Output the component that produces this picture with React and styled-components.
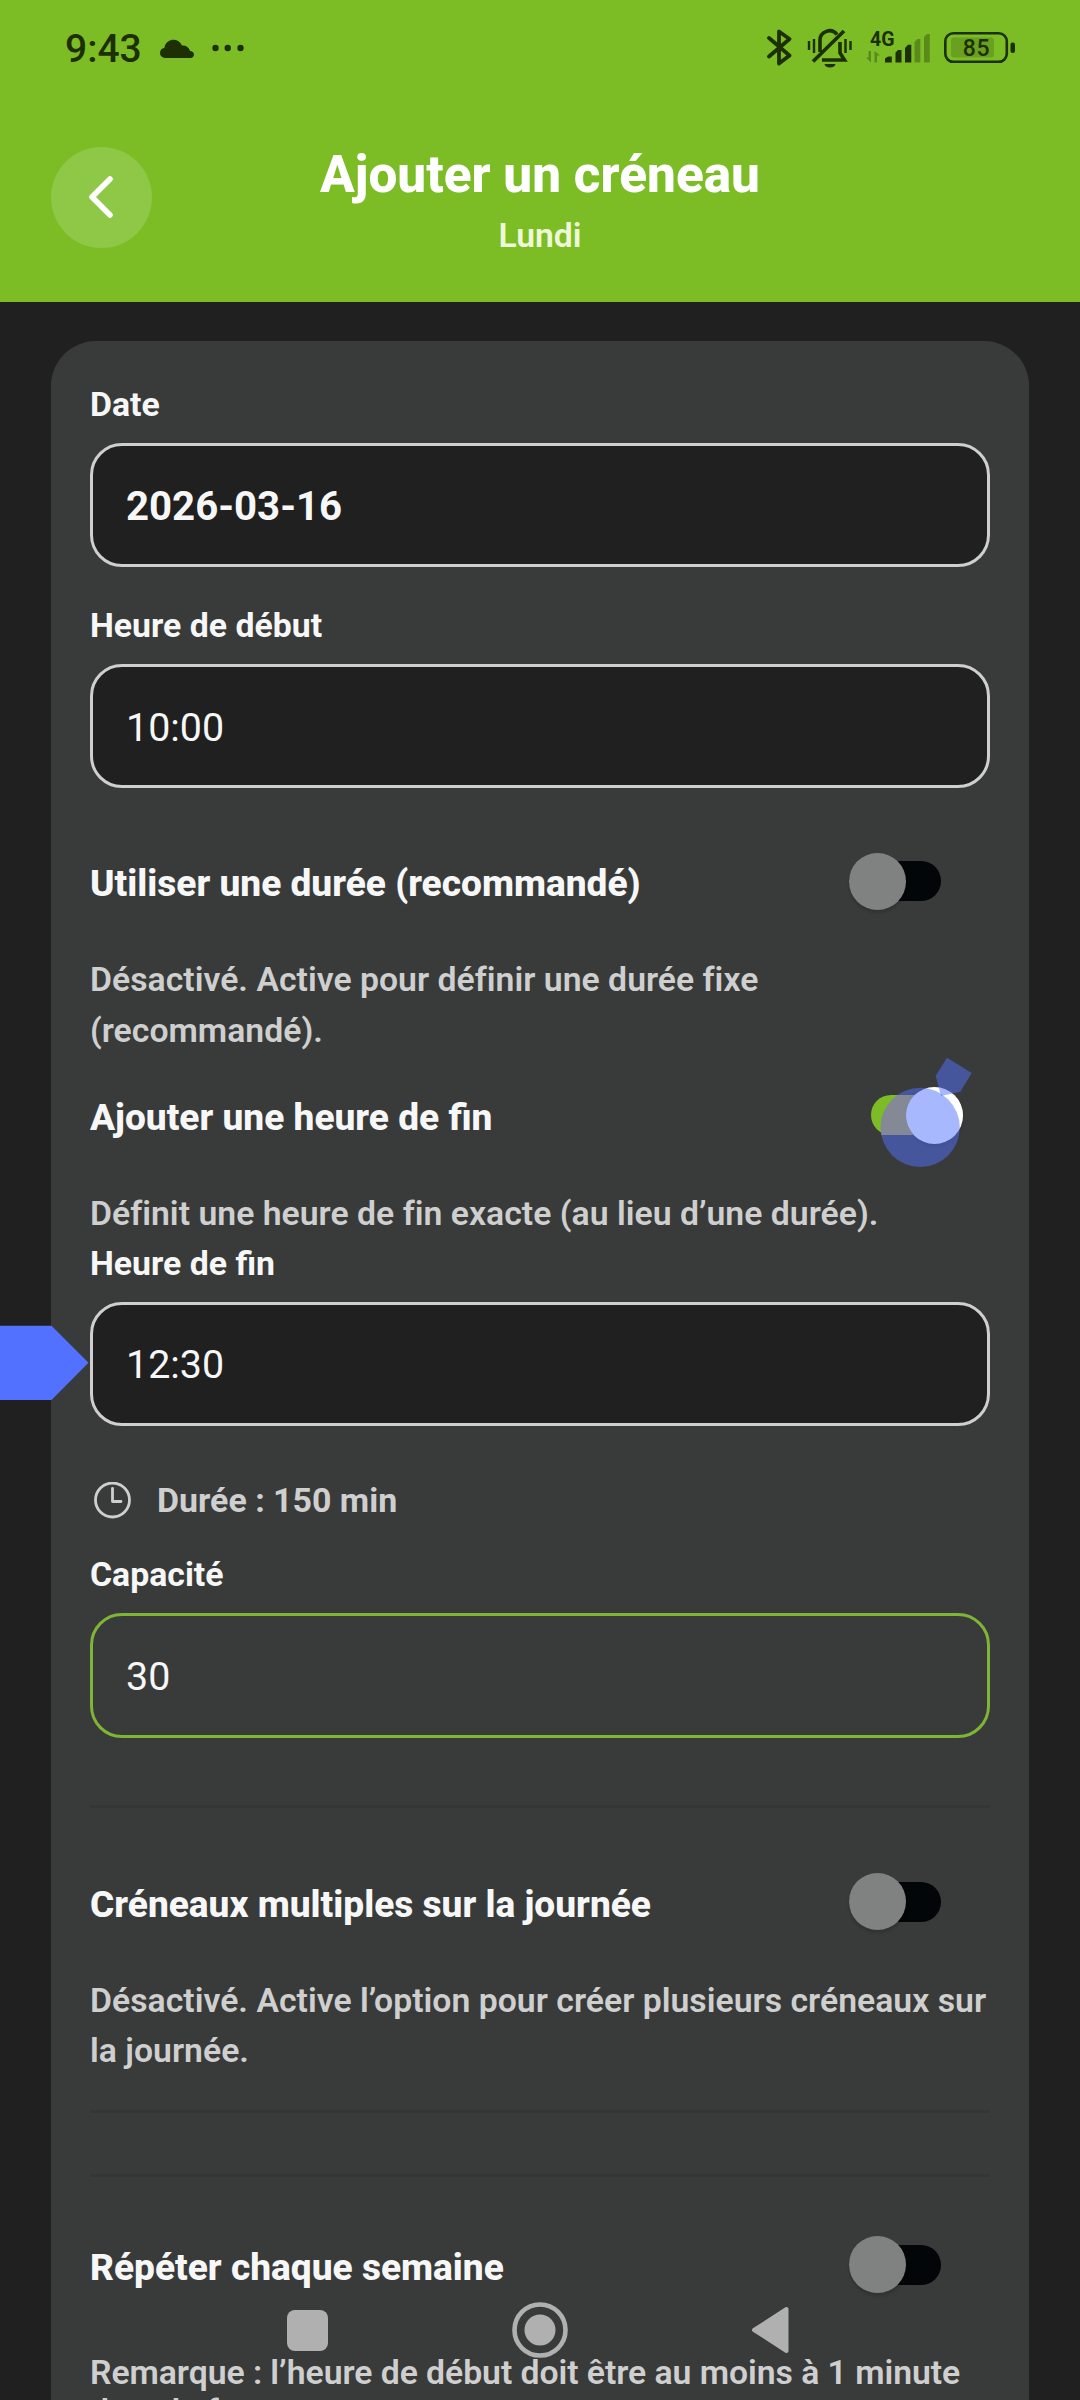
import styled, { createGlobalStyle } from "styled-components";

const GlobalStyle = createGlobalStyle`
    * {
        box-sizing: border-box;
    }

    body {
        margin: 0;
        background: #202020;
        font-family: Roboto, "Liberation Sans", sans-serif;
    }
`;

const Screen = styled.div`
    position: relative;
    display: flex;
    flex-direction: column;
    width: 1080px;
    height: 2400px;
    overflow: hidden;
    background: #202020;
`;

// Top of the screen
const Header = styled.header`
    flex: none;
    height: 302px;
    background: #7cbd26;
`;

const StatusBar = styled.div`
    display: flex;
    align-items: center;
    justify-content: space-between;
    height: 96px;
    padding: 0 64px 0 65px;
    color: #1c3004;
`;

const StatusGroup = styled.div`
    display: flex;
    align-items: center;
`;

const Clock = styled.span`
    width: 77px;
    font-size: 39px;
    font-weight: 500;
    line-height: 46px;
    white-space: nowrap;
`;

const TitleBar = styled.div`
    display: grid;
    grid-template-columns: 101px 1fr 101px;
    align-items: center;
    height: 202px;
    padding: 0 51px;
`;

const BackButton = styled.button`
    display: flex;
    align-items: center;
    justify-content: center;
    width: 101px;
    height: 101px;
    padding: 0;
    border: 0;
    border-radius: 50%;
    background: #8fc747;
`;

const Titles = styled.div`
    padding-top: 7px;
    text-align: center;
`;

const Title = styled.h1`
    margin: 0;
    font-size: 51.3px;
    font-weight: 800;
    line-height: 60px;
    color: #fff;
`;

const Subtitle = styled.p`
    margin: 11px 0 0;
    font-size: 33.75px;
    font-weight: 600;
    line-height: 40px;
    color: #eef8d9;
`;

// Form
const Card = styled.main`
    flex: 1;
    margin: 39px 51px 0;
    padding: 44px 39px 0;
    border-radius: 45px 45px 0 0;
    background: #393b3a;
`;

const Field = styled.div`
    margin-top: ${({ $top }) => $top || 0}px;
`;

const Label = styled.label`
    display: block;
    margin-bottom: 18px;
    font-size: 33.8px;
    font-weight: 700;
    line-height: 40px;
    color: #f7f7f7;
`;

const Value = styled.div`
    display: flex;
    align-items: center;
    height: ${({ $active }) => ($active ? 125 : 124)}px;
    padding: 2px 33px 0;
    border: 3px solid ${({ $active }) => ($active ? "#7fb536" : "#cfcfcf")};
    border-radius: 32px;
    background: ${({ $active }) => ($active ? "transparent" : "#202020")};
    font-size: ${({ $bold }) => ($bold ? 40.2 : 39.4)}px;
    font-weight: ${({ $bold }) => ($bold ? 700 : 400)};
    color: #f7f7f7;
`;

const Row = styled.div`
    display: flex;
    align-items: center;
    justify-content: space-between;
    height: 60px;
    margin-top: ${({ $top }) => $top}px;
`;

const RowTitle = styled.span`
    font-size: 37.1px;
    font-weight: 800;
    line-height: 44px;
    color: #f7f7f7;
`;

const Switch = styled.div`
    display: flex;
    align-items: center;
    justify-content: ${({ $on }) => ($on ? "flex-end" : "flex-start")};
    width: 92px;
    height: 40px;
    margin: 0 ${({ $on }) => ($on ? 27 : 49)}px 6px 0;
    border-radius: 20px;
    background: ${({ $on }) => ($on ? "#7cbd26" : "#020608")};
`;

const Thumb = styled.span`
    flex: none;
    width: 57px;
    height: 57px;
    border-radius: 50%;
    background: ${({ $on }) => ($on ? "#fff" : "#808281")};
    box-shadow: 0 3px 3px rgba(0, 0, 0, 0.15);
`;

const Note = styled.p`
    margin: ${({ $top }) => $top}px 0 0;
    font-size: 33.75px;
    font-weight: 600;
    line-height: ${({ $tight }) => ($tight ? "39.5px" : "50.6px")};
    letter-spacing: ${({ $tight }) => ($tight ? "-0.05px" : "0.02px")};
    color: #cfcfcf;
`;

const Duration = styled.div`
    display: flex;
    align-items: center;
    gap: 26px;
    height: 40px;
    margin-top: 55px;
    padding-left: 4px;
    font-size: 33.9px;
    font-weight: 700;
    color: #cfcfcf;
`;

const Divider = styled.hr`
    height: 3px;
    margin: ${({ $top }) => $top}px 0 0;
    border: 0;
    background: #353634;
`;

// Things floating over the form
const SideArrow = styled.svg`
    position: absolute;
    top: 1325px;
    left: 0;
`;

const Pointer = styled.svg`
    position: absolute;
    top: 1050px;
    left: 870px;
`;

const NavBar = styled.nav`
    position: absolute;
    right: 0;
    bottom: 34px;
    left: 0;
    display: flex;
    align-items: center;
    height: 72px;
    padding-left: 287px;
    color: #b0b0b0;
`;

const RecentsKey = styled.span`
    width: 41px;
    height: 41px;
    margin-right: 184px;
    border-radius: 8px;
    background: currentColor;
`;

const BackKey = styled.svg`
    margin-left: 183px;
`;

function CloudIcon() {
    return (
        <svg width="34" height="19" viewBox="0 0 34 19" fill="currentColor">
            <path d="M5 19A5 5 0 0 1 0 14 5.2 5.2 0 0 1 4.3 9 9.2 9.2 0 0 1 22 6.5 7.2 7.2 0 0 1 30 12 4 4 0 0 1 34 15.5 3.5 3.5 0 0 1 31 19Z" />
        </svg>
    );
}

function DotsIcon() {
    return (
        <svg width="32" height="8" viewBox="0 0 32 8" fill="currentColor">
            <circle cx="3.5" cy="4" r="3.2" />
            <circle cx="15.7" cy="4" r="3.2" />
            <circle cx="28.5" cy="4" r="3.2" />
        </svg>
    );
}

function BluetoothIcon() {
    return (
        <svg width="26" height="40" viewBox="0 0 26 40" fill="none" stroke="currentColor" strokeWidth="3.8">
            <path d="M3 10 23.5 27.5 13 35.500V3.500L23.500 11 3 28.5" strokeLinejoin="round" strokeLinecap="round" />
        </svg>
    );
}

function MutedBellIcon() {
    return (
        <svg width="46" height="42" viewBox="0 0 46 42" fill="none" stroke="currentColor" strokeWidth="3.6">
            <path d="M14 25V13.500A9.500 9.500 0 0 1 31 7.500M7 34.500 38 4M34 15V26L38.500 33H16" />
            <path d="M18.500 37H29.500A5.500 3.500 0 0 1 18.500 37Z" fill="currentColor" stroke="none" />
            <path d="M3 14V23M8 12V26M39.500 12V26M44.500 14V23" strokeWidth="2.400" />
        </svg>
    );
}

function SignalIcon() {
    return (
        <svg width="66" height="36" viewBox="0 0 66 36" fill="currentColor">
            <text x="6" y="15.500" fontSize="19.5" fontWeight="700">4G</text>
            <path d="M21 32.500V28.500L24 26.600H27.800V32.500ZM31.500 32.500V22.500L34 20H37.500V32.500ZM41 32.500V18L44 14.700H47.300V32.500Z" />
            <g opacity="0.35">
                <path d="M50.500 32.500V12L53.500 9H56.300V32.500ZM60 32.500V7L63 4H65.800V32.500Z" />
                <path d="M4.500 21H7V32.500L2 27.500H4.500ZM10.500 21 16 25.500H13V32.500H10.500Z" />
            </g>
        </svg>
    );
}

function BatteryIcon() {
    return (
        <svg width="72" height="32" viewBox="0 0 72 32">
            <rect x="1.300" y="1.300" width="61.5" height="28.5" rx="8" fill="none" stroke="currentColor" strokeWidth="2.6" />
            <rect x="7" y="5.500" width="43" height="20" rx="3" fill="#6aa01f" />
            <rect x="66.5" y="10.500" width="4.500" height="10.500" rx="2" fill="currentColor" />
            <text x="32.5" y="24" textAnchor="middle" fontSize="23" fontWeight="500" letterSpacing="0.8" fill="currentColor">
                85
            </text>
        </svg>
    );
}

function BackIcon() {
    return (
        <svg width="28" height="44" viewBox="0 0 28 44" fill="none" stroke="#fff" strokeWidth="5.6" strokeLinecap="round" strokeLinejoin="round">
            <path d="M22 4 4 22 22 40" />
        </svg>
    );
}

function ClockIcon() {
    return (
        <svg width="37" height="38" viewBox="0 0 37 38" fill="none" stroke="currentColor" strokeWidth="2.8" strokeLinecap="round" strokeLinejoin="round">
            <circle cx="18.5" cy="18" r="17" />
            <path d="M18.5 6.500V19.500H27" />
        </svg>
    );
}

function Toggle({ on }) {
    return (
        <Switch $on={on} role="switch" aria-checked={on}>
            <Thumb $on={on} />
        </Switch>
    );
}

function ToggleRow({ title, top, on = false }) {
    return (
        <Row $top={top}>
            <RowTitle>{title}</RowTitle>
            <Toggle on={on} />
        </Row>
    );
}

function TextField({ label, value, top, bold, active }) {
    return (
        <Field $top={top}>
            <Label>{label}</Label>
            <Value $bold={bold} $active={active}>{value}</Value>
        </Field>
    );
}

const StatusIcons = styled(StatusGroup)`
    gap: 14px;

    & > svg:nth-child(2) {
        margin: 0 -2px 0 0;
    }
`;

const StatusLeft = styled(StatusGroup)`
    gap: 18px;
    padding-top: 2px;

    & > svg {
        margin-bottom: 2px;
    }
`;

export default function App() {
    return (
        <Screen>
            <GlobalStyle />
            <Header>
                <StatusBar>
                    <StatusLeft>
                        <Clock>9:43</Clock>
                        <CloudIcon />
                        <DotsIcon />
                    </StatusLeft>
                    <StatusIcons>
                        <BluetoothIcon />
                        <MutedBellIcon />
                        <SignalIcon />
                        <BatteryIcon />
                    </StatusIcons>
                </StatusBar>
                <TitleBar>
                    <BackButton aria-label="Retour">
                        <BackIcon />
                    </BackButton>
                    <Titles>
                        <Title>Ajouter un créneau</Title>
                        <Subtitle>Lundi</Subtitle>
                    </Titles>
                </TitleBar>
            </Header>

            <Card>
                <TextField label="Date" value="2026-03-16" bold />
                <TextField label="Heure de début" value="10:00" top={39} />

                <ToggleRow title="Utiliser une durée (recommandé)" top={66} />
                <Note $top={41}>Désactivé. Active pour définir une durée fixe (recommandé).</Note>

                <ToggleRow title="Ajouter une heure de fin" top={32} on />
                <Note $top={41}>Définit une heure de fin exacte (au lieu d’une durée).</Note>

                <TextField label="Heure de fin" value="12:30" top={4} />
                <Duration>
                    <ClockIcon />
                    Durée : 150 min
                </Duration>
                <TextField label="Capacité" value="30" top={34} active />

                <Divider $top={67} />
                <ToggleRow title="Créneaux multiples sur la journée" top={67} />
                <Note $top={41}>Désactivé. Active l’option pour créer plusieurs créneaux sur la journée.</Note>
                <Divider $top={33} />

                <Divider $top={61} />
                <ToggleRow title="Répéter chaque semaine" top={61} />
                <Note $top={55} $tight>Remarque : l’heure de début doit être au moins à 1 minute dans le futur.</Note>
            </Card>

            <SideArrow width="90" height="76" viewBox="0 0 90 76">
                <path d="M0 0.7H51.5L88.5 37.8 51.5 75H0Z" fill="#5271ff" />
            </SideArrow>

            <Pointer width="110" height="125" viewBox="0 0 110 125">
                <clipPath id="pointer-disc">
                    <circle cx="50.2" cy="77.4" r="39.6" />
                </clipPath>
                <path d="M77 7.7 101.7 23 90.3 41.7 71 46 65.700 25.7Z" fill="#5271ff" fillOpacity="0.5" />
                <circle cx="50.2" cy="77.4" r="39.6" fill="#5271ff" fillOpacity="0.5" />
                {/* switch track seen through the disc */}
                <path d="M1 45H44A28.5 28.5 0 0 0 44 85H1Z" fill="#858996" clipPath="url(#pointer-disc)" />
            </Pointer>

            <NavBar>
                <RecentsKey />
                <svg width="56" height="56" viewBox="0 0 56 56">
                    <circle cx="28" cy="28" r="25.5" fill="none" stroke="currentColor" strokeWidth="4.6" />
                    <circle cx="28" cy="28" r="15.5" fill="currentColor" />
                </svg>
                <BackKey width="40" height="48" viewBox="0 0 40 48">
                    <path d="M3 24 35.5 3V45Z" fill="currentColor" stroke="currentColor" strokeWidth="4" strokeLinejoin="round" />
                </BackKey>
            </NavBar>
        </Screen>
    );
}
